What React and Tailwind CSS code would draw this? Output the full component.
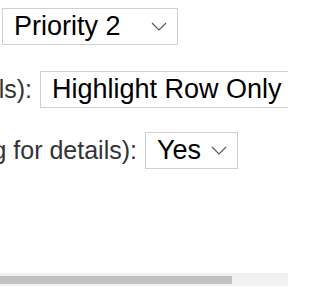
import React from "react";

// Settings rows, cropped the way the reference shows them: the labels run
// off the left edge, the scroll bar sits at the bottom.

function Chevron() {
  return (
    <svg width="16" height="9" viewBox="0 0 16 9" className="shrink-0">
      <polyline points="1,1 8,8 15,1" fill="none" stroke="#555" strokeWidth="1.1" />
    </svg>
  );
}

function FakeSelect({ value, gap }) {
  return (
    <div className="h-[37px] shrink-0 flex items-center border border-[#cfcfcf] bg-white pl-[11px] pr-[10px] text-black text-[27px]">
      <span className="whitespace-nowrap leading-none">{value}</span>
      <span className={gap}></span>
      <Chevron />
    </div>
  );
}

function Row({ label, labelWidth, value, gap, top }) {
  return (
    <div className={`flex items-center ${top}`}>
      <div className={`${labelWidth} shrink-0 flex justify-end overflow-visible whitespace-nowrap text-[#333] text-[25px] leading-none`}>
        <span>{label}</span>
      </div>
      <div className="w-[8px] shrink-0"></div>
      <FakeSelect value={value} gap={gap} />
    </div>
  );
}

export default function App() {
  return (
    <div
      className="w-[288px] h-[288px] overflow-hidden bg-white flex flex-col"
      style={{ fontFamily: '"Liberation Sans", Arial, sans-serif' }}
    >
      <div className="flex-1 min-h-0">
        <div className="flex flex-col -ml-[6px]">
          <Row label="Default priority:" labelWidth="w-0" value="Priority 2" gap="w-[30px]" top="mt-[8px]" />
          <Row label="Row style (see details):" labelWidth="w-[38px]" value="Highlight Row Only" gap="w-[30px]" top="mt-[26px]" />
          <Row label="Show badge (hover rating for details):" labelWidth="w-[143px]" value="Yes" gap="w-[10px]" top="mt-[24px]" />
        </div>
      </div>
      <div className="h-[13px] bg-[#f1f1f1] flex items-center mb-[2px]">
        <div className="w-[232px] h-[8px] bg-[#c1c1c1]"></div>
      </div>
    </div>
  );
}
